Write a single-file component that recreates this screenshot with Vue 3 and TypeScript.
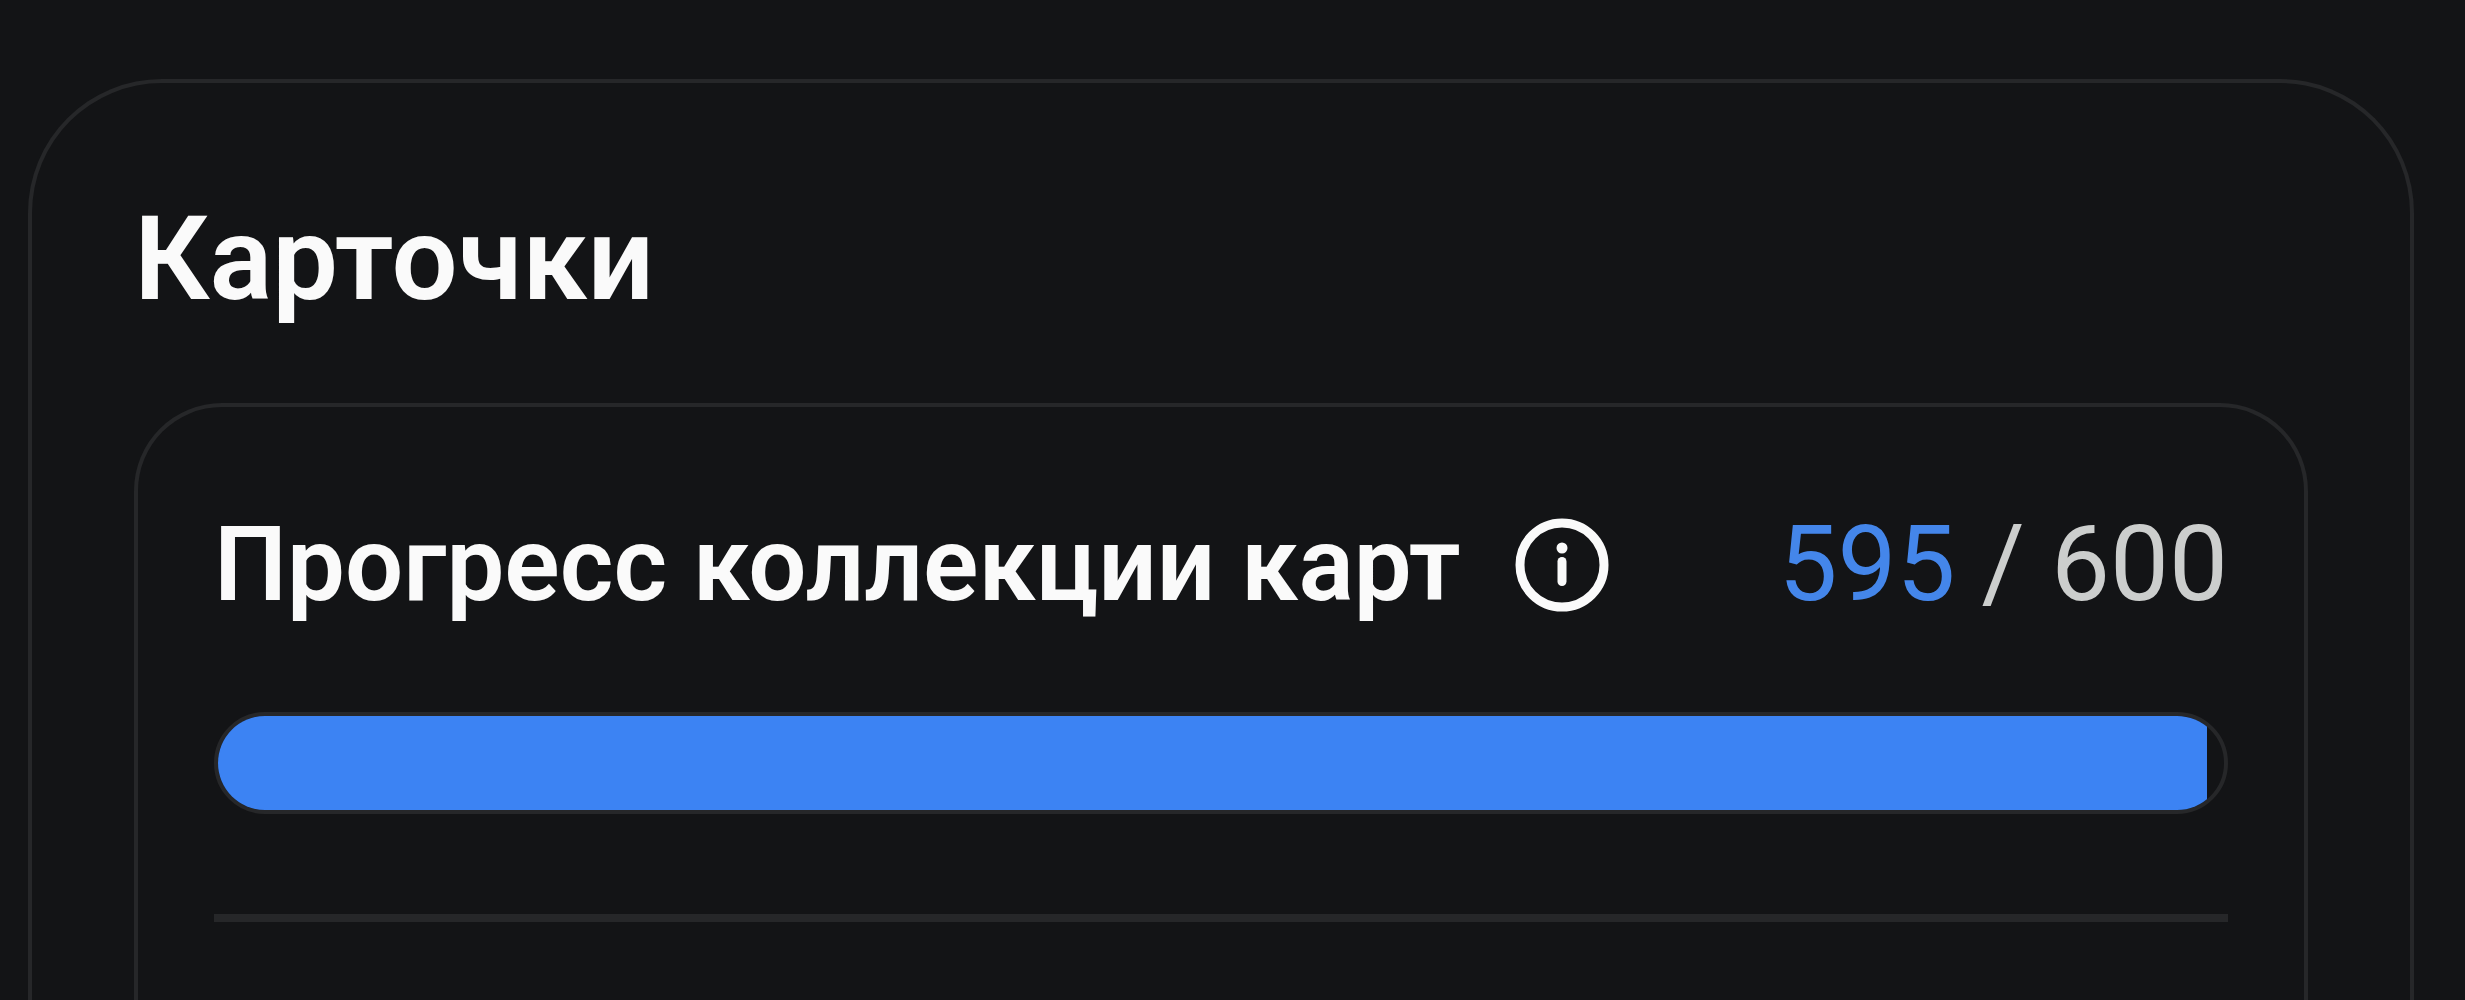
<script setup lang="ts">
import { computed, ref } from 'vue'

const collected = ref<number>(595)
const total = ref<number>(600)
const percent = computed<number>(() => (collected.value / total.value) * 100)
</script>

<template>
  <main class="page">
    <section class="panel">
      <h1 class="title">Карточки</h1>
      <div class="card">
        <div class="row">
          <h2 id="progress-label" class="label">Прогресс коллекции карт</h2>
          <button class="info" type="button" aria-label="Информация">
            <svg class="icon" viewBox="0 0 94 94" aria-hidden="true">
              <circle cx="47" cy="47" r="42" fill="none" stroke="currentColor" stroke-width="9" />
              <circle cx="47" cy="30" r="5.5" fill="currentColor" />
              <rect x="42.5" y="39" width="9" height="29" rx="4.5" fill="currentColor" />
            </svg>
          </button>
          <p class="count"><span class="current">{{ collected }}</span> / {{ total }}</p>
        </div>
        <div
          class="track"
          role="progressbar"
          aria-labelledby="progress-label"
          aria-valuemin="0"
          :aria-valuenow="collected"
          :aria-valuemax="total"
        >
          <div class="fill" :style="{ width: percent + '%' }"></div>
        </div>
        <hr class="divider" />
      </div>
    </section>
  </main>
</template>

<style>
body {
  margin: 0;
  background: #131416;
}
</style>

<style scoped>
.page {
  box-sizing: border-box;
  display: flex;
  height: 100vh;
  overflow: hidden;
  padding: 79px 51px 0 28px;
  background: #131416;
  color: #fafafa;
  font-family: Roboto, "Noto Sans", sans-serif;
}

.panel {
  display: flex;
  flex: 1;
  flex-direction: column;
  min-width: 0;
  padding: 108px 102px 0;
  border: 4px solid #262729;
  border-bottom: 0;
  border-radius: 134px 134px 0 0;
}

.title {
  margin: 0 0 76px;
  font-size: 117px;
  font-weight: 600;
  line-height: 136px;
}

.card {
  flex: 1;
  padding: 98px 76px 0;
  border: 4px solid #262729;
  border-bottom: 0;
  border-radius: 88px 88px 0 0;
}

.row {
  display: flex;
  align-items: center;
  margin-bottom: 87px;
  font-size: 103px;
  line-height: 120px;
  white-space: nowrap;
}

.label {
  margin: 0;
  font-size: inherit;
  font-weight: 600;
}

.info {
  flex: none;
  width: 94px;
  height: 94px;
  margin-left: 54px;
  padding: 0;
  border: 0;
  background: none;
  color: inherit;
  cursor: pointer;
}

.icon {
  display: block;
  width: 100%;
  height: 100%;
}

.count {
  margin: 0 0 0 auto;
  color: #cccecd;
  font-size: 105px;
}

.current {
  color: #4486ea;
}

.track {
  height: 94px;
  overflow: hidden;
  border: 4px solid #262729;
  border-radius: 51px;
}

.fill {
  height: 100%;
  background: #3c83f3;
}

.divider {
  height: 8px;
  margin: 100px 0 0;
  border: 0;
  background: #262729;
}
</style>
